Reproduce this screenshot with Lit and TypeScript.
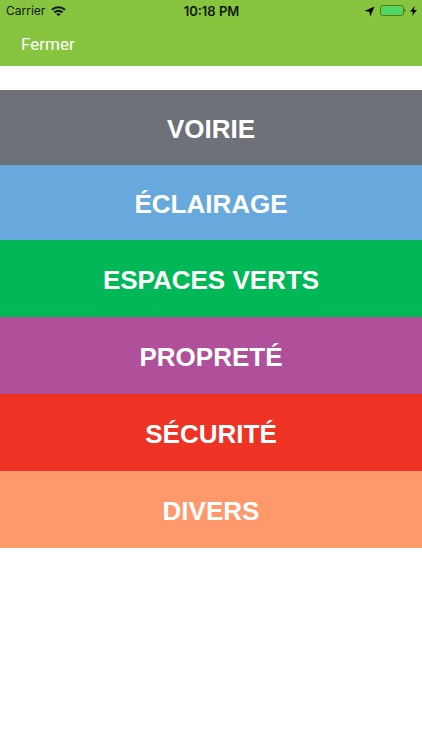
import { LitElement, html, css } from "lit";
import { customElement } from "lit/decorators.js";

interface Category {
  label: string;
  tone: string;
}

const CATEGORIES: Category[] = [
  { label: "VOIRIE", tone: "roads compact" },
  { label: "ÉCLAIRAGE", tone: "lighting compact" },
  { label: "ESPACES VERTS", tone: "parks" },
  { label: "PROPRETÉ", tone: "cleaning" },
  { label: "SÉCURITÉ", tone: "safety" },
  { label: "DIVERS", tone: "other" },
];

@customElement("status-bar")
class StatusBar extends LitElement {
  static styles = css`
    :host {
      display: grid;
      grid-template-columns: 1fr auto 1fr;
      align-items: center;
      height: 22px;
      padding: 0 5px 0 6px;
      font-size: 12px;
      line-height: 22px;
      color: #10180a;
    }
    .left,
    .right {
      display: flex;
      align-items: center;
    }
    .left {
      gap: 6px;
    }
    .right {
      justify-content: flex-end;
      gap: 4px;
    }
    .time {
      font-size: 13px;
      font-weight: 600;
    }
    svg {
      display: block;
    }
  `;

  render() {
    return html`
      <div class="left">
        <span>Carrier</span>
        <svg width="15" height="11" viewBox="0 0 15 11" aria-hidden="true">
          <g fill="none" stroke="#10180a" stroke-width="2.2">
            <path d="M1 3.8C4.6.4 10.4.4 14 3.8" />
            <path d="M3.4 6.5C5.7 4.3 9.3 4.3 11.6 6.5" />
          </g>
          <path d="M5.2 8C6.5 6.9 8.5 6.9 9.8 8L7.5 10.3Z" fill="#10180a" />
        </svg>
      </div>
      <span class="time">10:18 PM</span>
      <div class="right">
        <svg width="11" height="11" viewBox="0 0 11 11" aria-hidden="true">
          <path d="M10.6.4L6.2 10.4L5.4 5.8L.4 5Z" fill="#000" />
        </svg>
        <svg width="27" height="12" viewBox="0 0 27 12" aria-hidden="true">
          <rect x="1.5" y="0.5" width="23" height="10" rx="2.5" fill="none" stroke="#4f7d20" />
          <rect x="2.5" y="1.5" width="21" height="8" rx="1.5" fill="#4cd964" />
          <path d="M25.2 3.5C27 4.1 27 6.9 25.2 7.5Z" fill="#4f7d20" />
        </svg>
        <svg width="7" height="10" viewBox="0 0 7 10" aria-hidden="true">
          <path d="M4.6 0L.2 5.8H3L2.2 10L6.8 4.1H4Z" fill="#000" />
        </svg>
      </div>
    `;
  }
}

@customElement("app-root")
class AppRoot extends LitElement {
  static styles = css`
    :host {
      display: block;
      min-height: 100vh;
      background: #fff;
      font-family: Inter, "Liberation Sans", sans-serif;
    }
    header {
      background: #87c440;
    }
    nav {
      display: flex;
      align-items: center;
      height: 44px;
      padding: 0 21px;
    }
    button {
      margin: 0;
      padding: 0;
      border: 0;
      cursor: pointer;
    }
    .close {
      background: none;
      color: #fff;
      font: 400 17px/22px Roboto, "Liberation Sans", sans-serif;
    }
    main {
      display: flex;
      flex-direction: column;
      padding-top: 24px;
    }
    .category {
      height: 77px;
      padding-top: 2px;
      color: #fff;
      font: 700 26px/32px "Liberation Sans", Arial, sans-serif;
      text-align: center;
    }
    .compact {
      height: 75px;
    }
    .roads {
      background: #6f7178;
    }
    .lighting {
      background: #67a9dc;
    }
    .parks {
      background: #00b956;
    }
    .cleaning {
      background: #b0509a;
    }
    .safety {
      background: #ee3224;
    }
    .other {
      background: #ff996b;
    }
  `;

  render() {
    return html`
      <header>
        <status-bar></status-bar>
        <nav><button class="close" type="button">Fermer</button></nav>
      </header>
      <main>
        ${CATEGORIES.map(
          (c) => html`<button type="button" class="category ${c.tone}">${c.label}</button>`
        )}
      </main>
    `;
  }
}
